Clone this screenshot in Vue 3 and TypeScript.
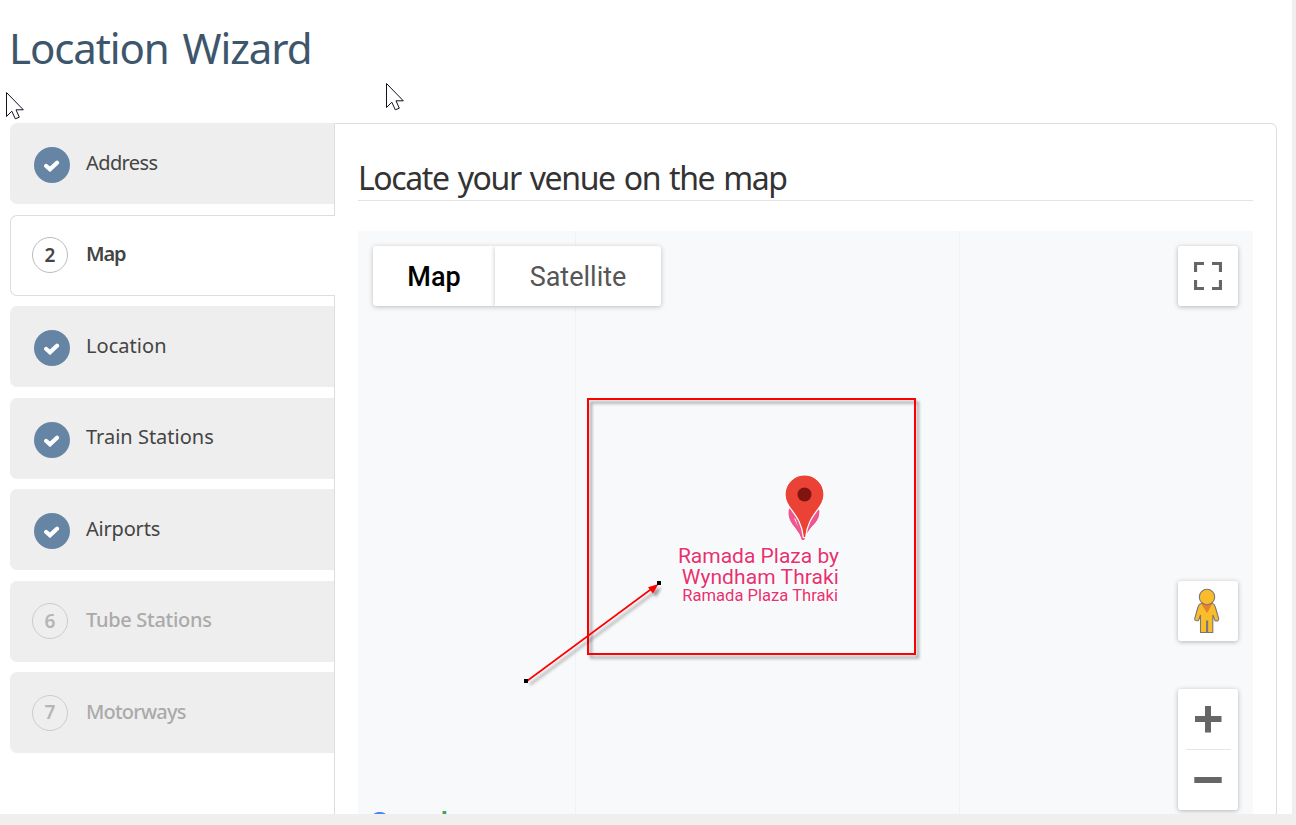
<template>
  <div class="page">
    <h1 class="page-title">Location Wizard</h1>

    <div class="wizard">
      <nav class="steps">
        <div
          v-for="step in steps"
          :key="step.id"
          class="step"
          :class="step.state"
        >
          <span v-if="step.state === 'done'" class="badge">
            <svg width="18" height="14" viewBox="0 0 18 14">
              <path d="M3.2 8 L7 11.3 L14 4.8" fill="none" stroke="#fff" stroke-width="4.2" stroke-linejoin="miter" stroke-linecap="round" />
            </svg>
          </span>
          <span v-else class="badge">{{ step.id }}</span>
          <span class="label" :style="{ letterSpacing: step.tracking + 'px' }">{{ step.label }}</span>
        </div>
      </nav>

      <section class="panel">
        <h2 class="panel-title">Locate your venue on the map</h2>

        <div class="map">
          <div class="map-types">
            <button class="map-type selected">Map</button>
            <button class="map-type">Satellite</button>
          </div>

          <div class="map-side">
            <button class="control">
              <svg width="28" height="28" viewBox="0 0 28 28">
                <path d="M1.5 10V1.5H10M18 1.5H26.5V10M26.5 18V26.5H18M10 26.5H1.5V18" fill="none" stroke="#666" stroke-width="3.2" />
              </svg>
            </button>
            <button class="control pegman">
              <svg width="28" height="46" viewBox="0 0 28 46">
                <path d="M8 15.5 L19.5 15.5 Q21.5 16 22.3 19 L25.8 31 Q25.5 33.5 22 32.6 L19.8 27 V44.5 H14.6 V33 H13.6 V44.5 H7.5 V27 L5.5 32.4 Q2 33.5 1.6 31 L5 19 Q6 16 8 15.5Z" fill="#fbbc2b" stroke="#777" stroke-width="1.1" />
                <path d="M8 15.5H19.5L14 25Z" fill="#e4812c" />
                <circle cx="14" cy="9" r="7.7" fill="#fbbc2b" stroke="#777" stroke-width="1.1" />
              </svg>
            </button>
            <div class="zoom">
              <button class="zoom-button">
                <svg width="28" height="28" viewBox="0 0 28 28">
                  <path d="M1 14H27.5M14 1V27.5" stroke="#666" stroke-width="6" />
                </svg>
              </button>
              <span class="zoom-line"></span>
              <button class="zoom-button">
                <svg width="28" height="28" viewBox="0 0 28 28">
                  <path d="M.3 14H27.7" stroke="#666" stroke-width="6" />
                </svg>
              </button>
            </div>
          </div>

          <!-- place pin with the hotel marker behind it -->
          <svg class="pin" width="44" height="68" viewBox="0 0 44 68">
            <path d="M5.5 34 C4 42 6 47 11 53 Q17 60 18.5 66.5 H21.5 Q23.5 59 29 53 C35 47 38 42 36.5 35 Z" fill="#ed568f" stroke="#fff" />
            <path d="M11 44 L15 53 L12.5 45Z" fill="#fff" />
            <path d="M21.5 1 C11 1 2 9.5 2 20.5 C2 35 18.5 40 20.3 63.5 H22.7 C24.5 40 41 35 41 20.5 C41 9.5 32 1 21.5 1Z" fill="#ea4335" stroke="#fff" stroke-width="1.2" />
            <circle cx="21.5" cy="20.5" r="7" fill="#811411" />
          </svg>

          <div class="place">
            <span class="place-name">Ramada Plaza by</span>
            <span class="place-name second">Wyndham Thraki</span>
            <span class="place-alias">Ramada Plaza Thraki</span>
          </div>

          <div class="logo">
            <span v-for="(l, i) in logo" :key="i" :class="l.tone">{{ l.char }}</span>
          </div>
        </div>
      </section>
    </div>

    <svg class="annotation" width="410" height="310" viewBox="520 390 410 310">
      <defs>
        <filter id="shade" x="-10%" y="-10%" width="125%" height="125%">
          <feDropShadow dx="3" dy="3.5" stdDeviation="1.5" flood-color="#000" flood-opacity=".38" />
        </filter>
      </defs>
      <g filter="url(#shade)">
        <rect x="588" y="399" width="327" height="255" fill="none" stroke="#f00" stroke-width="2" />
      </g>
      <g filter="url(#shade)">
        <path d="M527 681 L652 588.5" stroke="#f00" stroke-width="1.6" />
        <path d="M658.5 584 L653 593.5 L648 587.2Z" fill="#f00" />
      </g>
      <rect x="524" y="679" width="4" height="4" />
      <rect x="657" y="581" width="4" height="4" />
    </svg>

    <svg v-for="c in ['left', 'right']" :key="c" class="cursor" :class="c" width="20" height="29" viewBox="0 0 20 29">
      <path d="M1.5 1.5 V25.5 L6.8 20.2 L10.3 27.8 L14.3 26.2 L11 18.8 H18.3 Z" fill="#fff" stroke="#112" stroke-width="1" />
    </svg>
  </div>
</template>

<script setup lang="ts">
interface Step {
  id: number
  label: string
  state: 'done' | 'active' | 'disabled'
  tracking: number
}

const steps: Step[] = [
  { id: 1, label: 'Address', state: 'done', tracking: -0.6 },
  { id: 2, label: 'Map', state: 'active', tracking: -1.2 },
  { id: 3, label: 'Location', state: 'done', tracking: 0.05 },
  { id: 4, label: 'Train Stations', state: 'done', tracking: 0 },
  { id: 5, label: 'Airports', state: 'done', tracking: -0.2 },
  { id: 6, label: 'Tube Stations', state: 'disabled', tracking: -0.3 },
  { id: 7, label: 'Motorways', state: 'disabled', tracking: -0.8 }
]

const logo = [
  { char: 'G', tone: 'blue' },
  { char: 'o', tone: 'red' },
  { char: 'o', tone: 'yellow' },
  { char: 'g', tone: 'blue' },
  { char: 'l', tone: 'green' },
  { char: 'e', tone: 'red' }
]
</script>

<style>
body {
  background: #efefef;
  overflow: hidden;
}
</style>

<style scoped>
* {
  box-sizing: border-box;
}

.page {
  position: relative;
  display: flex;
  flex-direction: column;
  width: 1292px;
  height: 814px;
  overflow: hidden;
  background: #fff;
  font-family: "Trebuchet MS", "Noto Sans", sans-serif;
}

.page-title {
  flex: none;
  height: 123px;
  margin: 0;
  padding: 18px 0 0 9px;
  color: #3d566c;
  font-size: 42px;
  font-weight: 400;
  letter-spacing: -1.1px;
  line-height: 60px;
  white-space: nowrap;
  word-spacing: 4px;
}

.wizard {
  display: flex;
  flex: 1;
  min-height: 0;
  padding: 0 15px 0 10px;
}

.steps {
  display: flex;
  flex: none;
  flex-direction: column;
  gap: 10.5px;
  width: 324px;
}

.step {
  display: flex;
  flex: none;
  align-items: flex-start;
  height: 81px;
  padding: 22px 0 0 22px;
  border: 0 solid #ddd;
  border-radius: 7px 0 0 7px;
  background: #eee;
  color: #444;
  font-size: 20px;
}

.badge {
  display: flex;
  flex: none;
  align-items: center;
  justify-content: center;
  width: 36px;
  height: 36px;
  margin-right: 18px;
  border: 1px solid #bbb;
  border-radius: 50%;
  font-size: 19px;
  font-weight: 600;
  line-height: 34px;
}

.label {
  line-height: 34px;
}

.step:nth-child(odd) .label {
  line-height: 35px;
}

.done {
  padding: 24px 0 0 24px;
}

.done .badge {
  margin-right: 16px;
  border: 0;
  background: #6685a5;
}

.done .label {
  margin-top: -2px;
}

.active {
  z-index: 1;
  width: 325px;
  padding: 21px 0 0 21px;
  border-width: 1px 0 1px 1px;
  background: #fff;
  font-weight: 600;
}

.disabled {
  color: #aaa;
  font-weight: 500;
}

.disabled .badge {
  border-color: #ccc;
  color: #b5b5b5;
}

.disabled:last-child .badge {
  margin-top: 1px;
  padding-bottom: 2px;
}

.panel {
  flex: 1;
  min-width: 0;
  height: 720px;
  padding: 31px 23px 0;
  border: 1px solid #ddd;
  border-radius: 0 6px 0 0;
}

.panel-title {
  height: 46px;
  margin: 0 0 30px;
  border-bottom: 1px solid #e3e3e3;
  color: #333;
  font-size: 32px;
  font-weight: 400;
  letter-spacing: -1.4px;
  line-height: 46px;
  white-space: nowrap;
  word-spacing: 2.1px;
}

.map {
  position: relative;
  display: flex;
  justify-content: space-between;
  height: 620px;
  padding: 15px;
  background:
    linear-gradient(#f0f2f4, #f0f2f4) 217px 0 / 1px 100% no-repeat,
    linear-gradient(#f0f2f4, #f0f2f4) 601px 0 / 1px 100% no-repeat,
    #f8f9fb;
}

button {
  display: flex;
  align-items: center;
  justify-content: center;
  padding: 0;
  border: 0;
  background: #fff;
}

.map-types {
  display: flex;
  height: 60px;
}

.map-type {
  width: 166px;
  padding-top: 2px;
  border-radius: 0 3px 3px 0;
  box-shadow: 0 1px 5px rgba(0, 0, 0, 0.24);
  color: #565656;
  font: 400 27px/58px Roboto, sans-serif;
}

.selected {
  width: 122px;
  border-radius: 3px 0 0 3px;
  color: #000;
  font-weight: 500;
}

.map-side {
  display: flex;
  flex-direction: column;
  width: 60px;
}

.control,
.zoom {
  flex: none;
  width: 60px;
  height: 60px;
  border-radius: 3px;
  background: #fff;
  box-shadow: 0 1px 5px rgba(0, 0, 0, 0.28);
}

.pegman {
  margin-top: 275px;
}

.pegman svg {
  margin-left: -2px;
}

.zoom {
  display: flex;
  flex-direction: column;
  align-items: center;
  height: 121px;
  margin-top: 48px;
}

.zoom-button {
  width: 56px;
  height: 60px;
}

.zoom-line {
  width: 45px;
  height: 1px;
  background: #e6e6e6;
}

.pin {
  position: absolute;
  left: 425px;
  top: 243px;
}

.place {
  position: absolute;
  left: 319px;
  top: 315px;
  display: flex;
  flex-direction: column;
  align-items: flex-end;
  width: 162px;
  color: #e8316f;
  font-family: Roboto, sans-serif;
  text-shadow: 0 0 2px #fff, 1px 1px 1px #fff, -1px -1px 1px #fff;
  white-space: nowrap;
}

.place-name {
  font-size: 21px;
  line-height: 21px;
}

.second {
  letter-spacing: 0.08px;
}

.place-alias {
  margin-right: 1px;
  font-size: 16.6px;
  line-height: 15px;
}

.logo {
  position: absolute;
  left: 11px;
  top: 572px;
  font: 500 30px/40px Roboto, sans-serif;
}

.blue {
  color: #4285f4;
}

.red {
  color: #ea4335;
}

.yellow {
  color: #fbbc05;
}

.green {
  color: #34a853;
}

.annotation {
  position: absolute;
  left: 520px;
  top: 390px;
}

.cursor {
  position: absolute;
}

.cursor.left {
  left: 5px;
  top: 91px;
}

.cursor.right {
  left: 385px;
  top: 82px;
}
</style>
